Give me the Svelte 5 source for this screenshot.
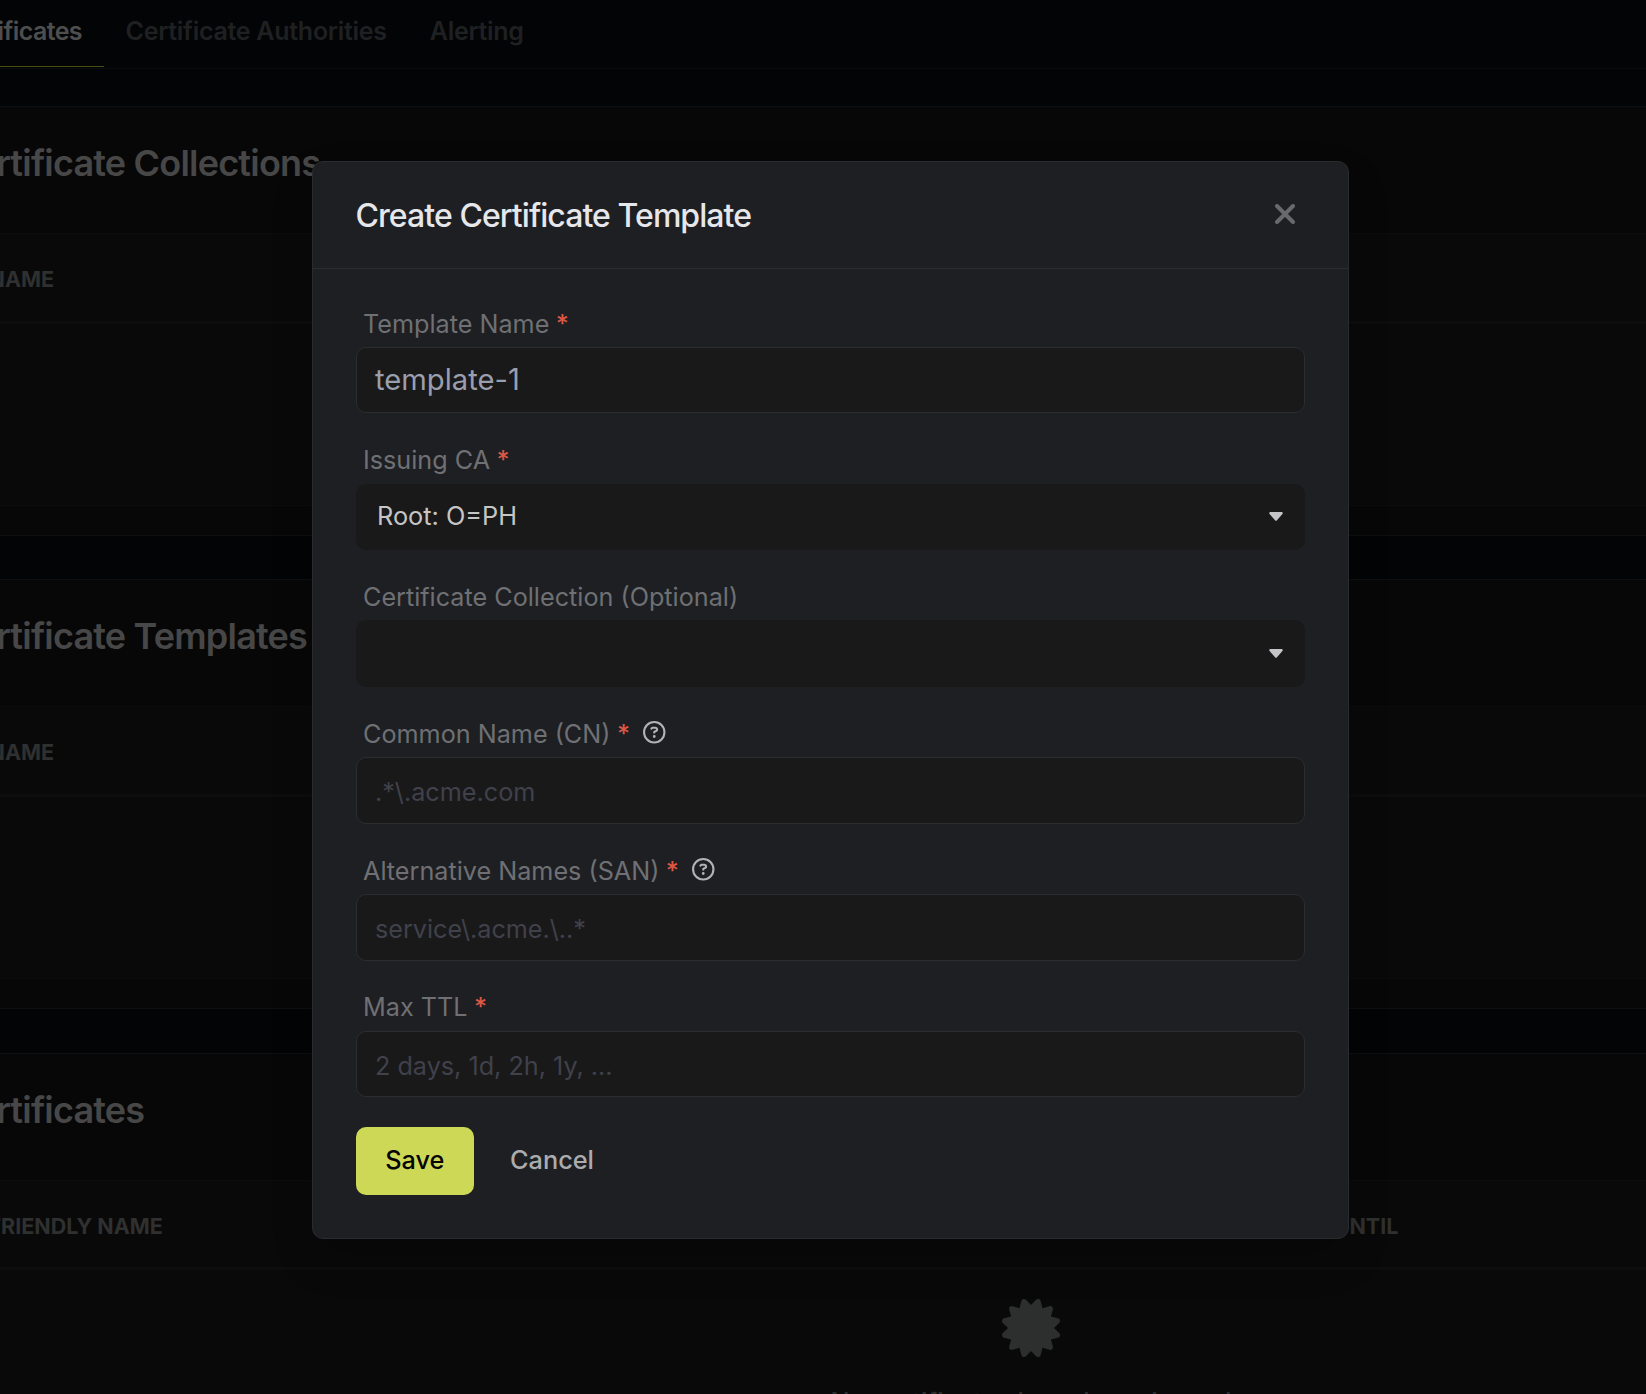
<script>
  const tabs = ['Certificates', 'Certificate Authorities', 'Alerting'];
  const sections = [
    { title: 'Certificate Collections', columns: ['NAME'] },
    { title: 'Certificate Templates', columns: ['NAME'] },
    { title: 'Certificates', columns: ['FRIENDLY NAME', 'VALID UNTIL'], empty: 'No certificates have been issued' }
  ];
  const fields = [
    { label: 'Template Name', required: true, value: 'template-1' },
    { label: 'Issuing CA', required: true, select: true, value: 'Root: O=PH' },
    { label: 'Certificate Collection (Optional)', select: true, value: '' },
    { label: 'Common Name (CN)', required: true, help: true, placeholder: '.*\\.acme.com' },
    { label: 'Alternative Names (SAN)', required: true, help: true, placeholder: 'service\\.acme.\\..*' },
    { label: 'Max TTL', required: true, placeholder: '2 days, 1d, 2h, 1y, ...' }
  ];
</script>

<div class="page">
  <nav class="tabs">
    {#each tabs as tab, i}
      <div class="tab" class:active={i === 0}>{tab}</div>
    {/each}
  </nav>

  <main class="sections">
    {#each sections as section}
      <section class="card" class:tall={section.empty}>
        <h2>{section.title}</h2>
        <div class="table">
          <div class="thead">
            {#each section.columns as column}
              <div class="th">{column}</div>
            {/each}
          </div>
          {#if section.empty}
            <div class="empty">
              <svg class="seal" viewBox="0 0 512 512" aria-hidden="true">
                <path d="M211 7.3C205 1 196-1.4 187.6 .8s-14.9 8.9-17.1 17.3L154.7 80.6l-62-17.5c-8.4-2.4-17.4 0-23.5 6.1s-8.5 15.1-6.1 23.5l17.5 62L18.1 170.6c-8.4 2.1-15 8.7-17.3 17.1S1 205 7.3 211l46.2 45L7.3 301C1 307-1.4 316 .8 324.4s8.9 14.9 17.3 17.1l62.5 15.8-17.5 62c-2.4 8.4 0 17.4 6.1 23.5s15.1 8.5 23.5 6.1l62-17.5 15.8 62.5c2.1 8.4 8.7 15 17.1 17.3s17.3-.2 23.4-6.4l45-46.2 45 46.2c6.1 6.2 15 8.7 23.4 6.4s14.9-8.9 17.1-17.3l15.8-62.5 62 17.5c8.4 2.4 17.4 0 23.5-6.1s8.5-15.1 6.1-23.5l-17.5-62 62.5-15.8c8.4-2.1 15-8.7 17.3-17.1s-.2-17.4-6.4-23.4l-46.2-45 46.2-45c6.2-6.1 8.7-15 6.4-23.4s-8.9-14.9-17.3-17.1l-62.5-15.8 17.5-62c2.4-8.4 0-17.4-6.1-23.5s-15.1-8.5-23.5-6.1l-62 17.5L341.4 18.1c-2.1-8.4-8.7-15-17.1-17.3S307 1 301 7.3L256 53.5 211 7.3z" />
              </svg>
              <p>{section.empty}</p>
            </div>
          {/if}
        </div>
      </section>
    {/each}
  </main>

  <div class="overlay">
    <div class="modal" role="dialog" aria-label="Create Certificate Template">
      <header>
        <h1>Create Certificate Template</h1>
        <button class="close" aria-label="Close">
          <svg viewBox="0 0 20 20"><path d="M2 2 18 18M18 2 2 18" /></svg>
        </button>
      </header>
      <form>
        {#each fields as field}
          <div class="field">
            <div class="label">
              <span>{field.label}</span>
              {#if field.required}<span class="star">*</span>{/if}
              {#if field.help}
                <svg class="help" viewBox="0 0 512 512" aria-hidden="true">
                  <path d="M464 256A208 208 0 1 0 48 256a208 208 0 1 0 416 0zM0 256a256 256 0 1 1 512 0A256 256 0 1 1 0 256zm169.8-90.7c7.9-22.3 29.1-37.3 52.8-37.3h58.3c34.9 0 63.1 28.3 63.1 63.1c0 22.6-12.1 43.5-31.7 54.8L280 264.4c-.2 13-10.9 23.6-24 23.6c-13.3 0-24-10.7-24-24V250.5c0-8.6 4.6-16.5 12.1-20.8l44.3-25.4c4.7-2.7 7.6-7.7 7.6-13.1c0-8.4-6.8-15.1-15.1-15.1H222.6c-3.4 0-6.4 2.1-7.5 5.3l-.4 1.2c-4.4 12.5-18.2 19-30.7 14.6s-19-18.2-14.6-30.7l.4-1.2zM224 352a32 32 0 1 1 64 0 32 32 0 1 1-64 0z" />
                </svg>
              {/if}
            </div>
            {#if field.select}
              <div class="select">
                <span>{field.value}</span>
                <svg class="caret" viewBox="0 0 14 9" aria-hidden="true">
                  <path d="M1.2 0H12.8Q14.5.5 13.4 2L8 8.2Q7 9.2 6 8.2L.6 2Q-.5.5 1.2 0Z" />
                </svg>
              </div>
            {:else if field.value}
              <div class="input filled">{field.value}</div>
            {:else}
              <div class="input hint">{field.placeholder}</div>
            {/if}
          </div>
        {/each}
        <div class="actions">
          <button type="button" class="save">Save</button>
          <button type="button" class="cancel">Cancel</button>
        </div>
      </form>
    </div>
  </div>
</div>

<style>
  :global(body) {
    background: #030406;
  }
  .page {
    position: relative;
    width: 1646px;
    height: 1394px;
    overflow: hidden;
    background: #030406;
    font-family: Inter, 'Liberation Sans', sans-serif;
    font-size: 25.3px;
  }
  h1, h2, p {
    margin: 0;
  }
  button {
    border: 0;
    padding: 0;
    background: none;
    font: inherit;
  }

  .tabs {
    display: flex;
    box-sizing: border-box;
    height: 69px;
    border-bottom: 1px solid #090a0c;
  }
  .tab {
    box-sizing: border-box;
    height: 67px;
    padding: 0 21.5px 5px;
    line-height: 62px;
    font-size: 25px;
    font-weight: 600;
    letter-spacing: -0.28px;
    color: #1f2021;
    white-space: nowrap;
  }
  .tab.active {
    display: flex;
    justify-content: flex-end;
    width: 104px;
    padding-right: 22px;
    letter-spacing: -0.6px;
    color: #4e4e4f;
    border-bottom: 1px solid #4a4d13;
  }

  .sections {
    display: flex;
    flex-direction: column;
    gap: 43.4px;
    width: 2250px;
    margin: 37px 0 0 -94px;
  }
  .card {
    box-sizing: border-box;
    height: 430px;
    border: 1px solid #0e0f10;
    background: #070707;
  }
  .card.tall {
    height: 600px;
  }
  h2 {
    height: 126px;
    padding-left: 43px;
    line-height: 112px;
    font-size: 36px;
    font-weight: 600;
    letter-spacing: -0.8px;
    color: #474747;
  }
  .table {
    box-sizing: border-box;
    height: 273px;
    border: 1px solid #0c0c0c;
    background: #090909;
  }
  .tall .table {
    height: 400px;
  }
  .thead {
    display: grid;
    grid-template-columns: 1276px 1fr;
    height: 86.5px;
    padding-left: 80.5px;
    border-bottom: 3px solid #0d0d0d;
    line-height: 90.4px;
    font-size: 21.5px;
    font-weight: 700;
    color: #2f3030;
  }
  .empty {
    display: flex;
    flex-direction: column;
    align-items: center;
    padding-top: 29px;
    color: #2d2f2e;
  }
  .seal {
    width: 58px;
    height: 58px;
    fill: currentColor;
  }
  .empty p {
    margin-top: 26px;
    line-height: 38px;
    font-weight: 500;
    letter-spacing: 0.15px;
  }

  .overlay {
    position: absolute;
    inset: 0;
    padding: 161px 0 0 312px;
  }
  .modal {
    box-sizing: border-box;
    width: 1037px;
    height: 1078px;
    border: 1px solid #2a2b2f;
    border-radius: 11px;
    background: #1e1f23;
    box-shadow: 0 20px 44px -6px rgba(0, 0, 0, 0.25);
  }
  header {
    display: flex;
    align-items: center;
    justify-content: space-between;
    box-sizing: border-box;
    height: 107px;
    padding: 0 52.6px 0 42.5px;
    border-bottom: 1px solid #2c2d31;
  }
  h1 {
    font-size: 32px;
    font-weight: 500;
    letter-spacing: -0.93px;
    color: #e6e7eb;
  }
  .close {
    height: 20px;
    margin-bottom: 3px;
  }
  .close svg {
    display: block;
    width: 20px;
    height: 20px;
    fill: none;
    stroke: #68696d;
    stroke-width: 4;
    stroke-linecap: round;
  }

  form {
    padding: 34.8px 43px 0 42.5px;
  }
  .field {
    height: 136.8px;
  }
  .label {
    display: flex;
    align-items: center;
    height: 38px;
    margin-bottom: 5px;
    padding-left: 7.5px;
    font-size: 25.2px;
    color: #6f7073;
  }
  .label span {
    padding-top: 1.4px;
    line-height: 38px;
  }
  .label .star {
    margin-left: 6.5px;
    font-weight: 500;
    color: #dc5744;
  }
  .help {
    width: 22.5px;
    height: 22.5px;
    margin: -1px 0 0 13.3px;
    fill: #b3b3b4;
  }
  .input, .select {
    box-sizing: border-box;
    height: 66.6px;
    border-radius: 10px;
    background: #19191a;
  }
  .input {
    padding-left: 18.5px;
    border: 1px solid #2c2d30;
    line-height: 64px;
  }
  .filled {
    font-size: 29.2px;
    color: #9b9fad;
  }
  .hint {
    line-height: 68.6px;
    font-size: 25.2px;
    color: #40414b;
  }
  .select {
    display: flex;
    align-items: center;
    justify-content: space-between;
    padding: 0 22.5px 0 21.5px;
    line-height: 63px;
    color: #c5c5c6;
  }
  .select span {
    height: 66px;
  }
  .caret {
    width: 14px;
    height: 9px;
    fill: #c5c5c8;
  }

  .actions {
    display: flex;
    margin-top: 2px;
  }
  .actions button {
    height: 68px;
    padding-bottom: 2px;
    line-height: 64px;
    font-weight: 500;
  }
  .actions .save {
    width: 118.5px;
    border-radius: 10px;
    background: #cdd956;
    color: #050505;
  }
  .actions .cancel {
    margin-left: 36px;
    color: #abacae;
  }
</style>
